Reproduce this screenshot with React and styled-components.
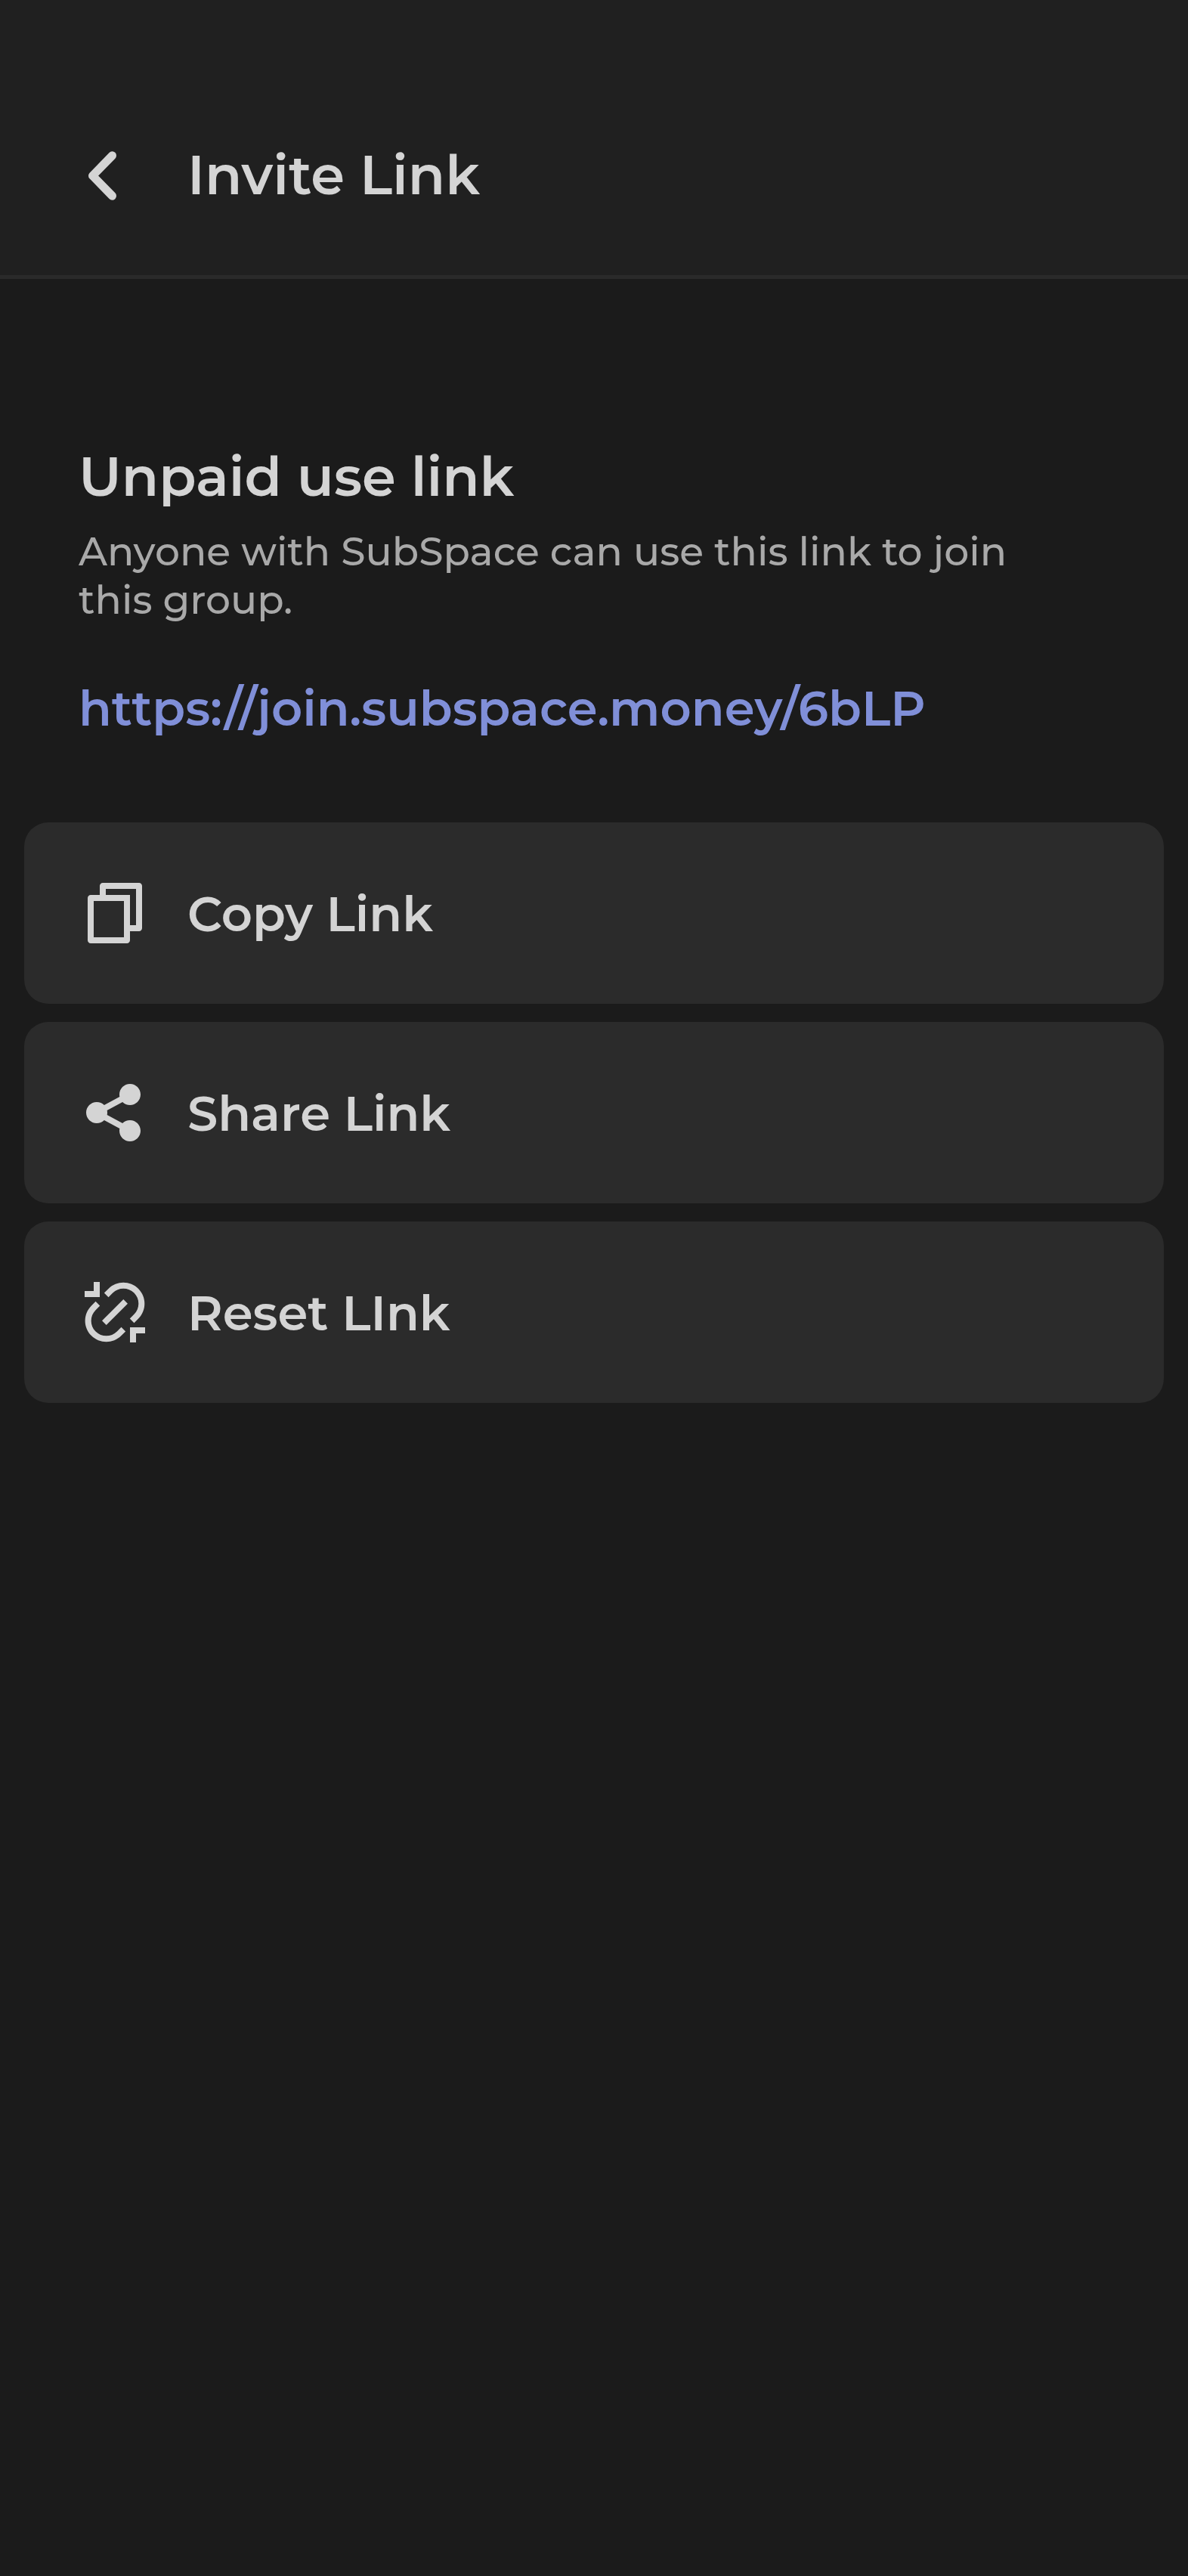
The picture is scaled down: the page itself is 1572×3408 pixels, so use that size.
import styled, { createGlobalStyle } from 'styled-components';
import { RiFileCopyLine, RiShareFill, RiLinkUnlink } from 'react-icons/ri';

const GlobalStyle = createGlobalStyle`
    *, *::before, *::after {
        box-sizing: border-box;
    }
    body {
        margin: 0;
        background: #1b1b1b;
        font-family: Montserrat, Inter, sans-serif;
    }
`;

const Screen = styled.div`
    width: 1572px;
    min-height: 3408px;
    background: #1b1b1b;
    color: #d4d4d4;
`;

const Header = styled.header`
    display: flex;
    align-items: center;
    height: 369px;
    padding: 98px 0 0 112px;
    background: #202020;
    border-bottom: 5px solid #2a2a2a;
`;

const BackButton = styled.button`
    display: flex;
    width: 48px;
    margin-right: 88px;
    padding: 0;
    border: 0;
    background: none;
    color: inherit;
`;

const Title = styled.h1`
    margin: 0;
    font-size: 72px;
    font-weight: 600;
    line-height: 88px;
    white-space: nowrap;
`;

const Info = styled.section`
    padding: 217px 104px 0;
`;

const Heading = styled.h2`
    margin: 0;
    font-size: 72px;
    font-weight: 600;
    line-height: 88px;
`;

const Description = styled.p`
    margin: 24px 0 0;
    color: #a9a9a9;
    font-size: 52px;
    font-weight: 500;
    line-height: 64px;
    white-space: nowrap;
`;

const InviteUrl = styled.a`
    display: block;
    margin-top: 71px;
    color: #808fd8;
    font-size: 64px;
    font-weight: 600;
    line-height: 80px;
`;

const Actions = styled.div`
    display: flex;
    flex-direction: column;
    gap: 24px;
    margin: 111px 32px 0;
`;

const Action = styled.button`
    display: flex;
    align-items: center;
    gap: 48px;
    height: 240px;
    padding: 0 72px;
    border: 0;
    border-radius: 32px;
    background: #2b2b2b;
    color: inherit;
    font: inherit;

    svg {
        flex: none;
        width: 96px;
        height: 96px;
    }
`;

const ActionLabel = styled.span`
    padding-top: 2px;
    font-size: 64px;
    font-weight: 600;
    line-height: 80px;
`;

const actions = [
    { label: 'Copy Link', Icon: RiFileCopyLine },
    { label: 'Share Link', Icon: RiShareFill },
    { label: 'Reset LInk', Icon: RiLinkUnlink },
];

const App = () => {
    return (
        <>
            <GlobalStyle />
            <Screen>
                <Header>
                    <BackButton aria-label="Back">
                        <svg width="48" height="72" viewBox="0 0 48 72" fill="none">
                            <path d="M36.5 10.8L10.5 37.5L36.5 64.2" stroke="currentColor" strokeWidth="11" strokeLinecap="round" strokeLinejoin="round" />
                        </svg>
                    </BackButton>
                    <Title>Invite Link</Title>
                </Header>
                <Info>
                    <Heading>Unpaid use link</Heading>
                    <Description>
                        Anyone with SubSpace can use this link to join
                        <br />
                        this group.
                    </Description>
                    <InviteUrl>https://join.subspace.money/6bLP</InviteUrl>
                </Info>
                <Actions>
                    {actions.map(({ label, Icon }) => (
                        <Action key={label}>
                            <Icon />
                            <ActionLabel>{label}</ActionLabel>
                        </Action>
                    ))}
                </Actions>
            </Screen>
        </>
    );
};

export default App;
